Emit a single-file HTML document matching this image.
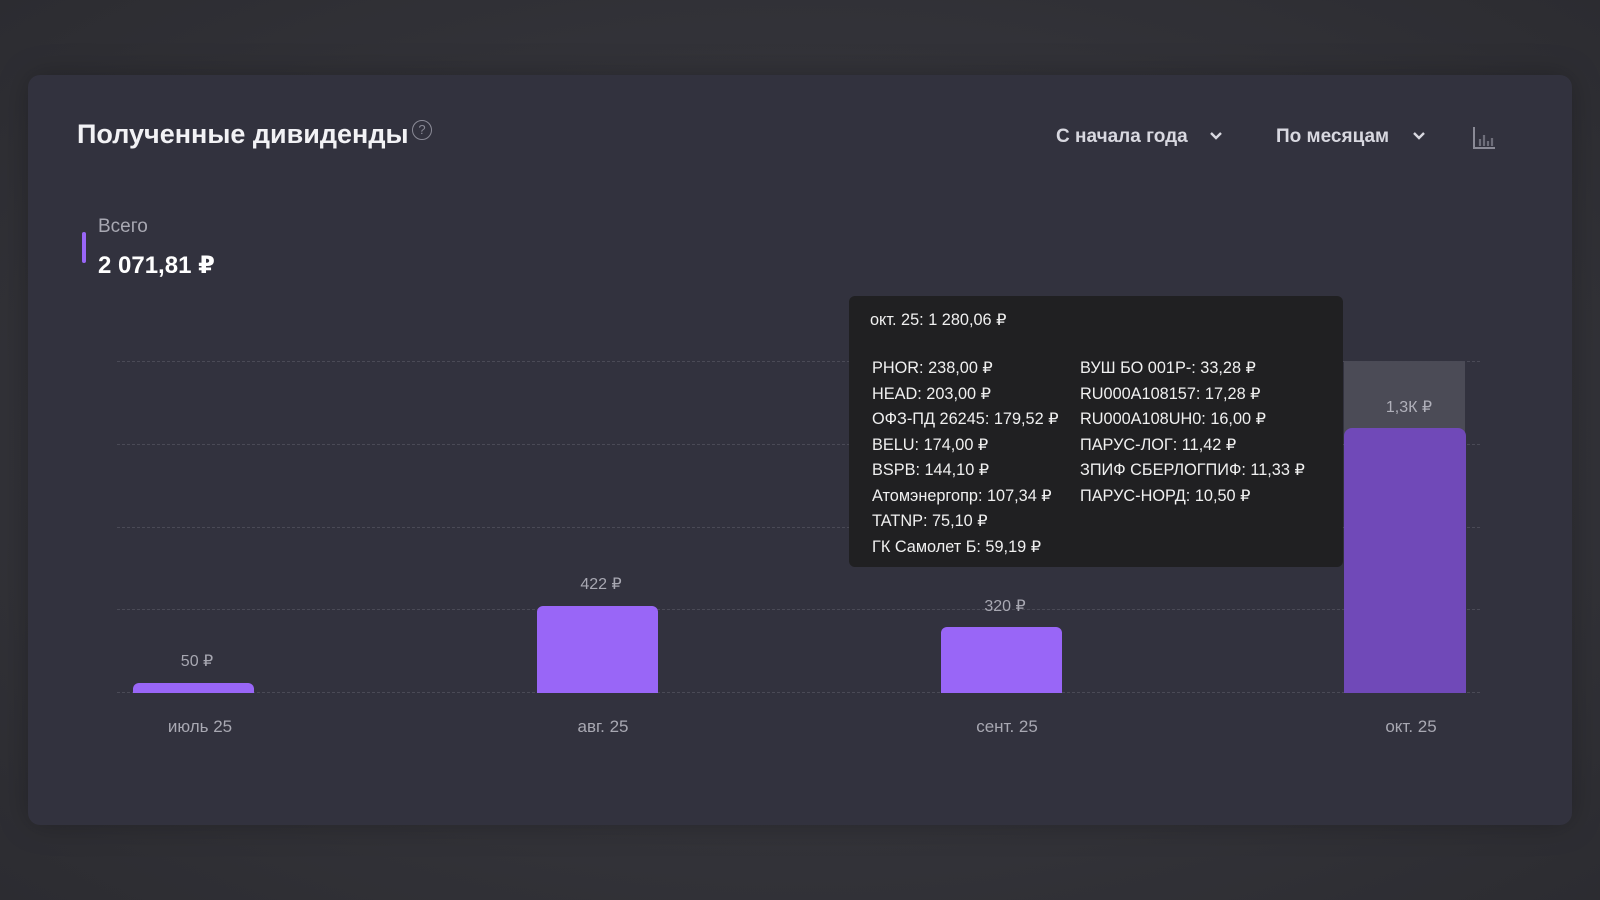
<!DOCTYPE html>
<html><head><meta charset="utf-8">
<style>
*{margin:0;padding:0;box-sizing:border-box}
html,body{width:1600px;height:900px;overflow:hidden;font-family:"Liberation Sans","DejaVu Sans",sans-serif}
body{background:radial-gradient(ellipse at 50% 50%,#3a3a41 0%,#333339 60%,#2c2c31 100%)}
.card{position:absolute;left:28px;top:75px;width:1544px;height:750px;background:#32323e;border-radius:12px;box-shadow:0 0 30px rgba(0,0,0,.25)}
.abs{position:absolute;white-space:nowrap}
.title{left:77px;top:119px;font-size:27px;font-weight:bold;color:#f2f2f5;letter-spacing:0}
.q{left:412px;top:120px;width:20px;height:20px;border:1.5px solid #8a8a96;border-radius:50%;color:#8a8a96;font-size:13px;text-align:center;line-height:17px}
.dd{font-size:19px;font-weight:bold;color:#d8d8e0;top:126px}
.chev{top:128px}
.grid{position:absolute;left:117px;width:1363px;border-top:1.5px dashed #4a4a56;height:0}
.bar{position:absolute;background:#9966f7;border-radius:6px 6px 0 0}
.lbl{font-size:16px;color:#a8a8b2;transform:translateX(-50%)}
.tip{position:absolute;left:849px;top:296px;width:494px;height:271px;background:#202022;border-radius:6px;color:#f0f0f0;font-size:16.3px}
.tip .r{position:absolute;white-space:nowrap}
</style></head><body>
<div class="card"></div>
<div class="abs title">Полученные дивиденды</div>
<div class="abs q">?</div>
<div class="abs dd" style="left:1056px">С начала года</div>
<svg class="abs chev" style="left:1208px" width="16" height="16" viewBox="0 0 16 16"><path d="M3 5l5 5 5-5" stroke="#d8d8e0" stroke-width="2.4" fill="none"/></svg>
<div class="abs dd" style="left:1276px">По месяцам</div>
<svg class="abs chev" style="left:1411px" width="16" height="16" viewBox="0 0 16 16"><path d="M3 5l5 5 5-5" stroke="#d8d8e0" stroke-width="2.4" fill="none"/></svg>
<svg class="abs" style="left:1472px;top:126px" width="24" height="24" viewBox="0 0 24 24"><path d="M2 1v21h21" stroke="#8a8a96" stroke-width="2" fill="none"/><path d="M8 20v-7M12 20v-11M16 20v-5M20 20v-8" stroke="#6e6e7a" stroke-width="2.2"/></svg>

<div class="abs" style="left:82px;top:232px;width:4px;height:31px;background:#9966f7;border-radius:2px"></div>
<div class="abs" style="left:98px;top:216px;font-size:19px;color:#a8a8b2">Всего</div>
<div class="abs" style="left:98px;top:251px;font-size:24px;font-weight:bold;color:#fff">2 071,81 ₽</div>

<div class="abs" style="left:1344px;top:361px;width:121px;height:331px;background:#4b4b56"></div>
<div class="grid" style="top:361px"></div>
<div class="grid" style="top:444px"></div>
<div class="grid" style="top:527px"></div>
<div class="grid" style="top:609px"></div>
<div class="grid" style="top:692px"></div>

<div class="bar" style="left:133px;top:683px;width:121px;height:10px"></div>
<div class="bar" style="left:537px;top:606px;width:121px;height:87px"></div>
<div class="bar" style="left:941px;top:627px;width:121px;height:66px"></div>
<div class="bar" style="left:1344px;top:428px;width:122px;height:265px;background:#7049b8;border-radius:8px 8px 0 0"></div>

<div class="abs lbl" style="left:197px;top:651px">50 ₽</div>
<div class="abs lbl" style="left:601px;top:574px">422 ₽</div>
<div class="abs lbl" style="left:1005px;top:596px">320 ₽</div>
<div class="abs lbl" style="left:1409px;top:397px;color:#b0b0ba">1,3К ₽</div>

<div class="abs lbl" style="left:200px;top:717px;font-size:17px">июль 25</div>
<div class="abs lbl" style="left:603px;top:717px;font-size:17px">авг. 25</div>
<div class="abs lbl" style="left:1007px;top:717px;font-size:17px">сент. 25</div>
<div class="abs lbl" style="left:1411px;top:717px;font-size:17px">окт. 25</div>

<div class="tip">
<div class="r" style="left:21px;top:14px">окт. 25: 1 280,06 ₽</div>
<div class="r" style="left:23px;top:60px;line-height:25.5px">PHOR: 238,00 ₽<br>HEAD: 203,00 ₽<br>ОФЗ-ПД 26245: 179,52 ₽<br>BELU: 174,00 ₽<br>BSPB: 144,10 ₽<br>Атомэнергопр: 107,34 ₽<br>TATNP: 75,10 ₽<br>ГК Самолет Б: 59,19 ₽</div>
<div class="r" style="left:231px;top:60px;line-height:25.5px">ВУШ БО 001Р-: 33,28 ₽<br>RU000A108157: 17,28 ₽<br>RU000A108UH0: 16,00 ₽<br>ПАРУС-ЛОГ: 11,42 ₽<br>ЗПИФ СБЕРЛОГПИФ: 11,33 ₽<br>ПАРУС-НОРД: 10,50 ₽</div>
</div>
</body></html>
